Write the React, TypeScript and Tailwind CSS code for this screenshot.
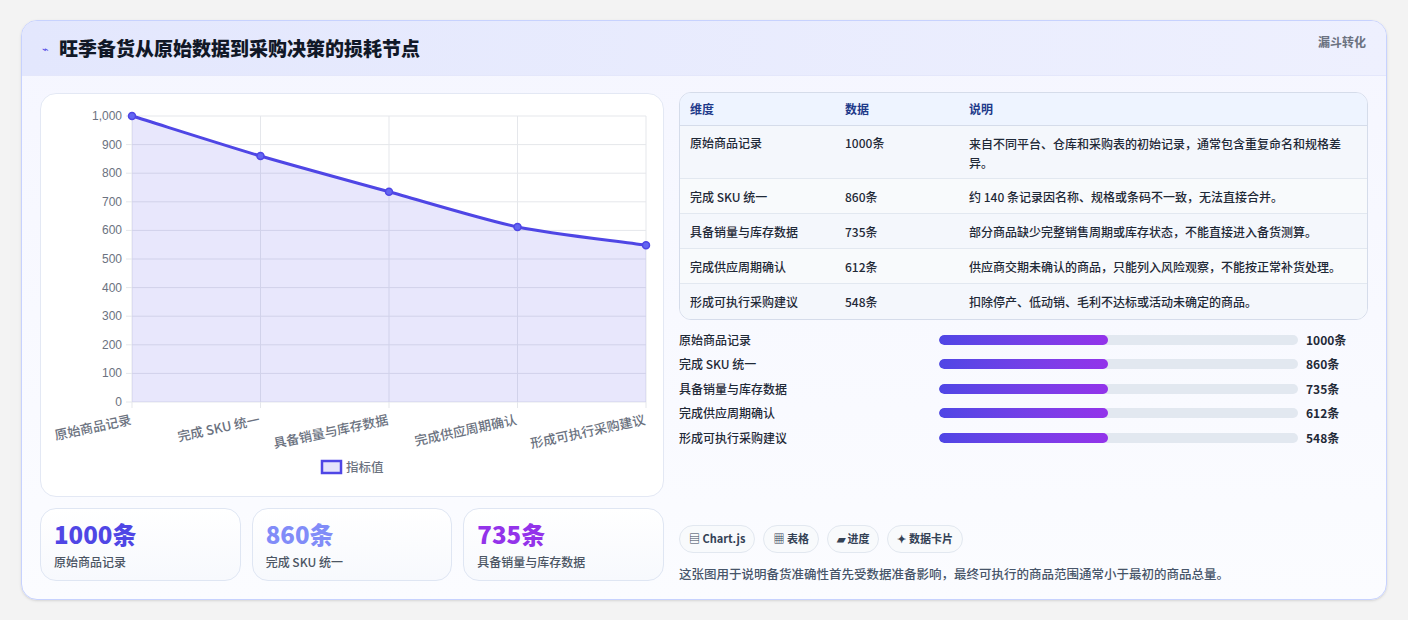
import React from "react";

const F = { fontFamily: '"Noto Sans CJK SC", "Noto Sans", sans-serif' };
const names = ["原始商品记录", "完成 SKU 统一", "具备销量与库存数据", "完成供应周期确认", "形成可执行采购建议"];
const vals = [1000, 860, 735, 612, 548];
const descs = [
  "来自不同平台、仓库和采购表的初始记录，通常包含重复命名和规格差异。",
  "约 140 条记录因名称、规格或条码不一致，无法直接合并。",
  "部分商品缺少完整销售周期或库存状态，不能直接进入备货测算。",
  "供应商交期未确认的商品，只能列入风险观察，不能按正常补货处理。",
  "扣除停产、低动销、毛利不达标或活动未确定的商品。",
];

function Chart() {
  const x0 = 91, x1 = 605, y0 = 22, y1 = 308;
  const xs = vals.map((_, i) => x0 + ((x1 - x0) * i) / 4);
  const ys = vals.map((v) => y1 - ((y1 - y0) * v) / 1000);
  const c = 20;
  let d = `M${xs[0]},${ys[0]}`;
  for (let i = 1; i < 5; i++) {
    const sPrev = i > 1 ? (ys[i] - ys[i - 2]) / 2 : ys[1] - ys[0];
    const sCur = i < 4 ? (ys[i + 1] - ys[i - 1]) / 2 : ys[4] - ys[3];
    d += ` C${xs[i - 1] + c * 1.6},${ys[i - 1] + (sPrev * c * 1.6) / 128.5} ${xs[i] - c * 1.6},${ys[i] - (sCur * c * 1.6) / 128.5} ${xs[i]},${ys[i]}`;
  }
  return (
    <svg width="622" height="400" style={{ fontFamily: '"Liberation Sans","Noto Sans CJK SC",sans-serif' }}>
      {Array.from({ length: 11 }).map((_, i) => {
        const y = y1 - ((y1 - y0) * i) / 10;
        return (
          <g key={i}>
            <line x1={x0 - 6} x2={x1} y1={y} y2={y} stroke="#e5e7eb" />
            <text x={x0 - 10} y={y + 4} textAnchor="end" fontSize="12" fill="#6b7280">
              {i === 10 ? "1,000" : i * 100}
            </text>
          </g>
        );
      })}
      {xs.map((x, i) => (
        <line key={i} x1={x} x2={x} y1={y0} y2={y1 + 6} stroke="#e5e7eb" />
      ))}
      <path d={`${d} L${x1},${y1} L${x0},${y1} Z`} fill="rgba(79,70,229,0.13)" />
      <path d={d} fill="none" stroke="#4f46e5" strokeWidth="3" />
      {xs.map((x, i) => (
        <circle key={i} cx={x} cy={ys[i]} r="3.5" fill="#6366f1" stroke="#4f46e5" strokeWidth="1.5" />
      ))}
      {names.map((n, i) => (
        <text key={i} x={xs[i]} y={y1 + 22} textAnchor="end" fontSize="13" fontWeight="500" fill="#6b7280" transform={`rotate(-12 ${xs[i]} ${y1 + 22})`} style={F}>
          {n}
        </text>
      ))}
      <rect x="281" y="367" width="19" height="12" fill="rgba(79,70,229,0.15)" stroke="#4f46e5" strokeWidth="2.5" />
      <text x="305" y="378" fontSize="12.5" fontWeight="500" fill="#6b7280" style={F}>指标值</text>
    </svg>
  );
}

export default function App() {
  return (
    <div className="min-h-[620px] bg-[#f3f3f3] p-5 pb-5" style={F}>
      <div className="mx-[1px] rounded-2xl border border-[#c7d2fe] bg-gradient-to-b from-[#f5f6ff] to-[#fbfcff] overflow-hidden shadow-sm h-[580px]">
        <div className="h-[55px] flex items-center justify-between px-5 bg-gradient-to-r from-[#e3e7fd] to-[#eef0fe] border-b border-[#e4e7fb]">
          <div className="flex items-center gap-2.5">
            <span className="text-[#4f46e5] text-[11px]">⌁</span>
            <span className="text-[19px] font-black text-[#111827]">旺季备货从原始数据到采购决策的损耗节点</span>
          </div>
          <span className="text-[12px] font-bold text-[#6b7280] -mt-3">漏斗转化</span>
        </div>
        <div className="flex gap-[15px] px-[18px] pt-[17px]">
          <div className="w-[624px] flex flex-col gap-[11px]">
            <div className="h-[404px] rounded-2xl border border-[#e3e8f4] bg-white">
              <Chart />
            </div>
            <div className="grid grid-cols-3 gap-[11px]">
              {[["1000条", "text-[#4f46e5]", "原始商品记录"], ["860条", "text-[#818cf8]", "完成 SKU 统一"], ["735条", "text-[#9333ea]", "具备销量与库存数据"]].map(([v, c, l]) => (
                <div key={v} className="h-[73px] rounded-2xl border border-[#dfe6f3] bg-gradient-to-b from-white to-[#f7f9fd] px-[13px] pt-[10px]">
                  <div className={`text-[24px] font-black leading-[30px] ${c}`}>{v}</div>
                  <div className="text-[12px] font-medium text-[#4b5563] mt-1">{l}</div>
                </div>
              ))}
            </div>
          </div>
          <div className="flex-1 flex flex-col">
            <div className="-mt-[1px] rounded-xl border border-[#d5dcea] overflow-hidden text-[12px] font-medium text-[#1f2937]">
              <div className="flex h-[33px] items-center bg-[#eef4ff] border-b border-[#d5dcea] font-bold text-[#1e3a8a]">
                <div className="w-[165px] pl-[10px]">维度</div>
                <div className="w-[124px]">数据</div>
                <div className="flex-1">说明</div>
              </div>
              {names.map((n, i) => (
                <div key={n} className={`flex ${i === 0 ? "h-[53px] items-start pt-[8px]" : "h-[35px] items-center"} ${i < 4 ? "border-b border-[#e2e8f0]" : ""} ${i % 2 ? "bg-[#f8fafc]" : "bg-[#f4f7fc]"}`}>
                  <div className="w-[165px] pl-[10px] leading-[17px]">{n}</div>
                  <div className="w-[124px] leading-[17px]">{vals[i]}条</div>
                  <div className="flex-1 pr-[10px] leading-[19px]">{descs[i]}</div>
                </div>
              ))}
            </div>
            <div className="mt-[11px] flex flex-col gap-[7px]">
              {names.map((n, i) => (
                <div key={n} className="flex items-center h-[17.5px] text-[12px] font-medium">
                  <div className="w-[260px] text-[#1f2937]">{n}</div>
                  <div className="w-[359px] h-[10px] rounded-full bg-[#e2e8f0] overflow-hidden">
                    <div className="h-full w-[47%] rounded-full bg-gradient-to-r from-[#4f46e5] to-[#9333ea]" />
                  </div>
                  <div className="ml-2 font-bold text-[#1f2937]">{vals[i]}条</div>
                </div>
              ))}
            </div>
            <div className="mt-[78px] flex gap-2 text-[11px] font-bold text-[#334155]">
              {["▤ Chart.js", "▦ 表格", "▰ 进度", "✦ 数据卡片"].map((t) => (
                <span key={t} className="h-[28px] px-[9px] flex items-center rounded-full border border-[#e2e8f0] bg-[#f8fafc]">{t}</span>
              ))}
            </div>
            <div className="mt-[12px] text-[12.5px] font-medium text-[#475569]">这张图用于说明备货准确性首先受数据准备影响，最终可执行的商品范围通常小于最初的商品总量。</div>
          </div>
        </div>
      </div>
    </div>
  );
}
